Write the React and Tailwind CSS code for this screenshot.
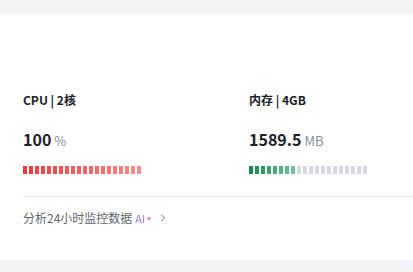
import { ChevronRight } from 'lucide-react';

const font = { fontFamily: '"Noto Sans CJK SC", "Noto Sans", sans-serif' };

function mix(a, b, t) {
  const pa = a.match(/\w\w/g).map((h) => parseInt(h, 16));
  const pb = b.match(/\w\w/g).map((h) => parseInt(h, 16));
  return `rgb(${pa.map((v, i) => Math.round(v + (pb[i] - v) * t)).join(',')})`;
}

function SegBar({ filled, from, to }) {
  return (
    <div className="flex gap-[2px]">
      {Array.from({ length: 20 }).map((_, i) => (
        <div
          key={i}
          className="w-[4px] h-[8px] bg-[#d6d9e1]"
          style={i < filled ? { background: mix(from, to, filled > 1 ? i / (filled - 1) : 0) } : undefined}
        />
      ))}
    </div>
  );
}

function Metric({ title, value, unit, bar }) {
  return (
    <div className="w-[226px] shrink-0 flex flex-col">
      <div className="text-[12px] leading-[18px] font-semibold text-[#1d2129]">{title}</div>
      <div className="mt-[19px] flex items-baseline gap-[3px] h-[22px]">
        <span className="text-[16px] leading-[22px] font-semibold text-[#1d2129]">{value}</span>
        <span className="text-[13px] text-[#86909c]">{unit}</span>
      </div>
      <div className="mt-[16px]">{bar}</div>
    </div>
  );
}

export default function App() {
  return (
    <div className="w-[413px] h-[272px] bg-[#f2f3f6] pt-[14px] overflow-hidden" style={font}>
      <div className="bg-white h-[246px] pl-[23px] pt-[77px]">
        <div className="flex">
          <Metric title="CPU | 2核" value="100" unit="%" bar={<SegBar filled={20} from="ef3b3f" to="f98b8b" />} />
          <Metric title="内存 | 4GB" value="1589.5" unit="MB" bar={<SegBar filled={8} from="178a50" to="6fc096" />} />
        </div>
        <div className="mt-[22px] border-t border-[#e5e7ee]" />
        <div className="mt-[12px] flex items-center text-[12px] leading-[18px] text-[#62666f]">
          <span>分析24小时监控数据</span>
          <span className="ml-[3px] text-[11px] bg-gradient-to-r from-[#5b7cf6] to-[#b06cf0] bg-clip-text text-transparent">AI</span>
          <span className="text-[7px] text-[#e55fb9] ml-[1px]">✦</span>
          <ChevronRight size={12} strokeWidth={2} className="ml-[5px] text-[#6b7079]" />
        </div>
      </div>
    </div>
  );
}
